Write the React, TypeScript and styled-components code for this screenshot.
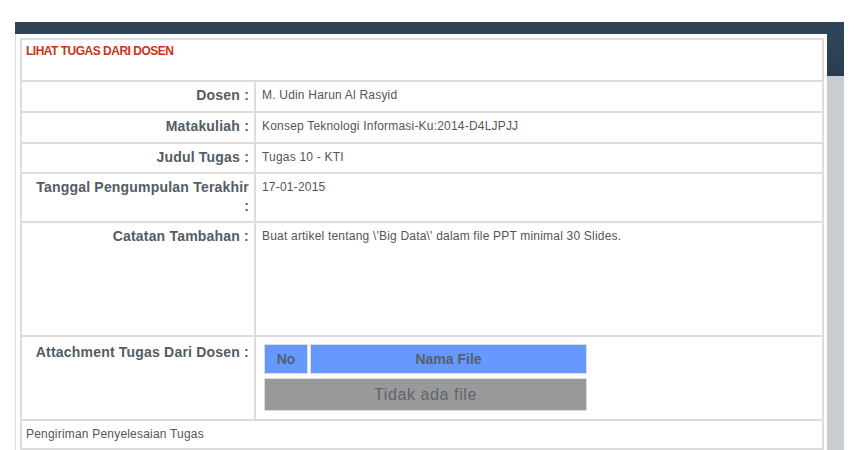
import React from "react";
import styled, { createGlobalStyle } from "styled-components";

const GlobalStyle = createGlobalStyle`
  html, body {
    margin: 0;
    padding: 0;
    overflow: hidden;
    background: #ffffff;
    font-family: "Liberation Sans", Arial, sans-serif;
  }
`;

const Page = styled.div`
  padding: 22px 0 0 15px;
`;

const Frame = styled.div`
  width: 829px;
`;

const TopBar = styled.div`
  height: 12px;
  background: #2e4559;
`;

const Body = styled.div`
  display: flex;
  height: 416px;
`;

const Main = styled.div`
  width: 804px;
  padding: 4px 3px 0 4px;
  border-left: 1px solid #dddddd;
  overflow: hidden;
`;

const Strip = styled.div`
  width: 17px;
  background: linear-gradient(
    to bottom,
    #2e4559 0,
    #283d50 42px,
    #c9cdd1 42px,
    #c9cdd1 100%
  );
`;

const DetailGrid = styled.div`
  display: grid;
  grid-template-columns: 232px 566px;
  grid-template-rows: 40px 29px 29px 28px 47px 112px 82px 27px 40px;
  gap: 2px;
  border: 2px solid #dddddd;
  background: #dddddd;
`;

const Cell = styled.div`
  background: #ffffff;
  min-width: 0;
`;

const Title = styled(Cell)`
  grid-column: 1 / -1;
  padding: 2px 4px;
  font-size: 12px;
  line-height: 18px;
  font-weight: bold;
  letter-spacing: -0.5px;
  color: #cc3314;
`;

const Section = styled(Cell)`
  grid-column: 1 / -1;
  padding: 4px;
  font-size: 12px;
  line-height: 18px;
  letter-spacing: 0.2px;
  color: #555555;
`;

const Label = styled(Cell)<{ $top?: number }>`
  padding: ${(p) => p.$top ?? 4}px 5px 4px 12px;
  text-align: right;
  font-size: 14px;
  line-height: 19px;
  font-weight: bold;
  letter-spacing: 0.2px;
  color: #525c66;
`;

const Value = styled(Cell)`
  padding: 4px 6px;
  font-size: 12px;
  line-height: 18px;
  letter-spacing: 0.2px;
  color: #555555;
`;

const AttachCell = styled(Cell)`
  padding: 7px 8px;
`;

const FileTable = styled.div`
  display: grid;
  grid-template-columns: 44px 277px;
  grid-template-rows: 30px 33px;
  column-gap: 2px;
  row-gap: 4px;
`;

const HeadCell = styled.div`
  box-sizing: border-box;
  display: flex;
  align-items: center;
  justify-content: center;
  border: 1px solid #dddddd;
  background: #6699ff;
  font-size: 14px;
  font-weight: bold;
  color: #55606b;
`;

const EmptyCell = styled.div`
  box-sizing: border-box;
  grid-column: 1 / -1;
  display: flex;
  align-items: center;
  justify-content: center;
  border: 1px solid #dddddd;
  background: #999999;
  font-size: 16px;
  letter-spacing: 0.6px;
  color: #5d6670;
`;

const rows = [
  { label: "Dosen :", value: "M. Udin Harun Al Rasyid" },
  { label: "Matakuliah :", value: "Konsep Teknologi Informasi-Ku:2014-D4LJPJJ" },
  { label: "Judul Tugas :", value: "Tugas 10 - KTI" },
  { label: "Tanggal Pengumpulan Terakhir :", value: "17-01-2015" },
  {
    label: "Catatan Tambahan :",
    value: "Buat artikel tentang \\'Big Data\\' dalam file PPT minimal 30 Slides.",
  },
];

export default function App() {
  return (
    <>
      <GlobalStyle />
      <Page>
        <Frame>
          <TopBar />
          <Body>
            <Main>
              <DetailGrid>
                <Title>LIHAT TUGAS DARI DOSEN</Title>
                {rows.map((r) => (
                  <React.Fragment key={r.label}>
                    <Label>{r.label}</Label>
                    <Value>{r.value}</Value>
                  </React.Fragment>
                ))}
                <Label $top={6}>Attachment Tugas Dari Dosen :</Label>
                <AttachCell>
                  <FileTable>
                    <HeadCell>No</HeadCell>
                    <HeadCell>Nama File</HeadCell>
                    <EmptyCell>Tidak ada file</EmptyCell>
                  </FileTable>
                </AttachCell>
                <Section>Pengiriman Penyelesaian Tugas</Section>
                <Label />
                <Value />
              </DetailGrid>
            </Main>
            <Strip />
          </Body>
        </Frame>
      </Page>
    </>
  );
}
